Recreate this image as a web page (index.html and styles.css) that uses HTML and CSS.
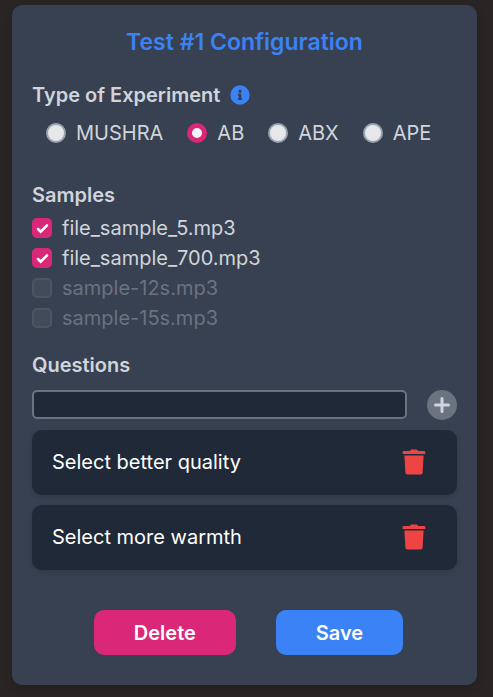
FILE: index.html
```html
<!DOCTYPE html>
<html lang="en">
<head>
<meta charset="utf-8">
<meta name="viewport" content="width=device-width, initial-scale=1">
<title>Test #1 Configuration</title>
<link rel="stylesheet" href="styles.css">
</head>
<body>
<form class="card">
  <h1 class="title">Test #1 Configuration</h1>

  <fieldset class="group">
    <legend class="heading">
      Type of Experiment
      <svg class="info" viewBox="0 0 512 512" role="img" aria-label="Information"><path fill="currentColor" d="M256 8a248 248 0 1 0 0 496 248 248 0 1 0 0-496zm0 110a42 42 0 1 1 0 84 42 42 0 1 1 0-84zm56 254c0 7-5 12-12 12h-88c-7 0-12-5-12-12v-24c0-7 5-12 12-12h12v-64h-12c-7 0-12-5-12-12v-24c0-7 5-12 12-12h64c7 0 12 5 12 12v100h12c7 0 12 5 12 12v24z"/></svg>
    </legend>
    <div class="types">
      <label class="option"><input class="radio" type="radio" name="type">MUSHRA</label>
      <label class="option"><input class="radio" type="radio" name="type" checked>AB</label>
      <label class="option"><input class="radio" type="radio" name="type">ABX</label>
      <label class="option"><input class="radio" type="radio" name="type">APE</label>
    </div>
  </fieldset>

  <fieldset class="group samples">
    <legend class="heading">Samples</legend>
    <div class="files">
      <label class="option"><input class="check" type="checkbox" checked>file_sample_5.mp3</label>
      <label class="option"><input class="check" type="checkbox" checked>file_sample_700.mp3</label>
      <label class="option disabled"><input class="check" type="checkbox" disabled>sample-12s.mp3</label>
      <label class="option disabled"><input class="check" type="checkbox" disabled>sample-15s.mp3</label>
    </div>
  </fieldset>

  <section class="questions">
    <label class="heading" for="question">Questions</label>
    <div class="entry">
      <input class="field" id="question" type="text">
      <button class="add" type="button" aria-label="Add question">
        <svg class="plus" viewBox="0 0 16 16"><path d="M8 1.5v13M1.5 8h13" fill="none" stroke="currentColor" stroke-width="3" stroke-linecap="round"/></svg>
      </button>
    </div>
    <ul class="list">
      <li class="item">
        <span>Select better quality</span>
        <button class="remove" type="button" aria-label="Remove question">
          <svg class="trash" viewBox="0 0 24 26"><path fill="currentColor" d="M1.5 2H8l.8-1.2Q9 .5 9.500.5h5q.5 0 .7.3L16 2h6.500q.8 0 .8.8v2.200H.7V2.800q0-.8.8-.8zM2.400 6.500h19.200l-1 17.200q-.1 1.800-1.900 1.800H5.300q-1.800 0-1.900-1.800z"/></svg>
        </button>
      </li>
      <li class="item">
        <span>Select more warmth</span>
        <button class="remove" type="button" aria-label="Remove question">
          <svg class="trash" viewBox="0 0 24 26"><path fill="currentColor" d="M1.500 2H8l.8-1.200Q9 .5 9.500.5h5q.5 0 .7.3L16 2h6.500q.8 0 .8.8v2.200H.7V2.800q0-.8.8-.8zM2.400 6.500h19.200l-1 17.200q-.1 1.800-1.900 1.800H5.300q-1.800 0-1.900-1.800z"/></svg>
        </button>
      </li>
    </ul>
  </section>

  <div class="actions">
    <button class="btn delete" type="button">Delete</button>
    <button class="btn save" type="submit">Save</button>
  </div>
</form>
</body>
</html>
```
FILE: styles.css
```css
* {
  box-sizing: border-box;
}

body {
  margin: 0;
  padding: 5px 16px 12px 12px;
  background: #292524;
  color: #d1d5db;
  font: 20px/30px Inter, sans-serif;
}

button,
input {
  margin: 0;
  font: inherit;
}

.card {
  padding: 20px 20px 30px;
  border-radius: 10px;
  background: #374151;
  box-shadow: 0 4px 8px rgb(0 0 0 / 15%);
}

.title {
  margin: 0 0 20px;
  color: #3b82f6;
  font-size: 23px;
  line-height: 35px;
  font-weight: 600;
  text-align: center;
}

.group {
  min-width: 0;
  margin: 0;
  padding: 0;
  border: 0;
}

.heading {
  display: flex;
  align-items: center;
  gap: 10px;
  padding: 0;
  font-weight: 600;
}

.info {
  width: 20px;
  height: 20px;
  color: #3b82f6;
}

.types {
  display: flex;
  flex-wrap: wrap;
  gap: 0 24px;
  padding: 8px 0 0 14px;
}

.option {
  display: flex;
  align-items: center;
  gap: 10px;
}

.radio,
.check {
  appearance: none;
  flex: none;
  width: 20px;
  height: 20px;
}

.radio {
  border: 2px solid #9ca3af;
  border-radius: 50%;
  background: #e5e7eb;
}

.radio:checked {
  border: 5px solid #db2777;
  background: #f3f4f6;
}

.check {
  border: 2px solid #4b5563;
  border-radius: 5px;
  background: #414b5a;
}

.check:checked {
  border: 0;
  background: #db2777 url("data:image/svg+xml,%3Csvg xmlns='http://www.w3.org/2000/svg' viewBox='0 0 20 20'%3E%3Cpath d='M6 11l2.700 2.700 6.300-6.400' fill='none' stroke='white' stroke-width='2.500' stroke-linecap='round'/%3E%3C/svg%3E");
}

.disabled {
  color: #6b7280;
}

.samples {
  margin-top: 32px;
}

.files {
  padding-top: 3px;
}

.questions {
  margin-top: 17px;
}

.entry {
  display: flex;
  align-items: flex-start;
  gap: 20px;
  margin-top: 10px;
}

.field {
  flex: 1;
  min-width: 0;
  height: 29px;
  padding: 0 8px;
  border: 2px solid #6b7280;
  border-radius: 5px;
  background: #1f2937;
  color: #fff;
}

.add {
  display: grid;
  place-items: center;
  width: 30px;
  height: 30px;
  padding: 0;
  border: 0;
  border-radius: 50%;
  background: #6b7280;
  color: #d1d5db;
}

.plus {
  width: 16px;
  height: 16px;
}

.list {
  display: grid;
  gap: 10px;
  margin: 10px 0 0;
  padding: 0;
  list-style: none;
}

.item {
  display: flex;
  align-items: center;
  justify-content: space-between;
  min-height: 65px;
  padding: 10px 31px 12px 20px;
  border-radius: 10px;
  background: #1f2937;
  color: #fff;
  box-shadow: 0 2px 5px rgb(0 0 0 / 15%);
}

.remove {
  display: grid;
  padding: 0;
  border: 0;
  background: none;
  color: #ef4444;
}

.trash {
  width: 24px;
  height: 26px;
}

.actions {
  display: flex;
  justify-content: center;
  gap: 40px;
  margin-top: 40px;
  padding-left: 8px;
}

.btn {
  height: 45px;
  padding: 0 40px;
  border: 0;
  border-radius: 10px;
  color: #fff;
  font-weight: 600;
}

.delete {
  background: #db2777;
}

.save {
  background: #3b82f6;
}
```
